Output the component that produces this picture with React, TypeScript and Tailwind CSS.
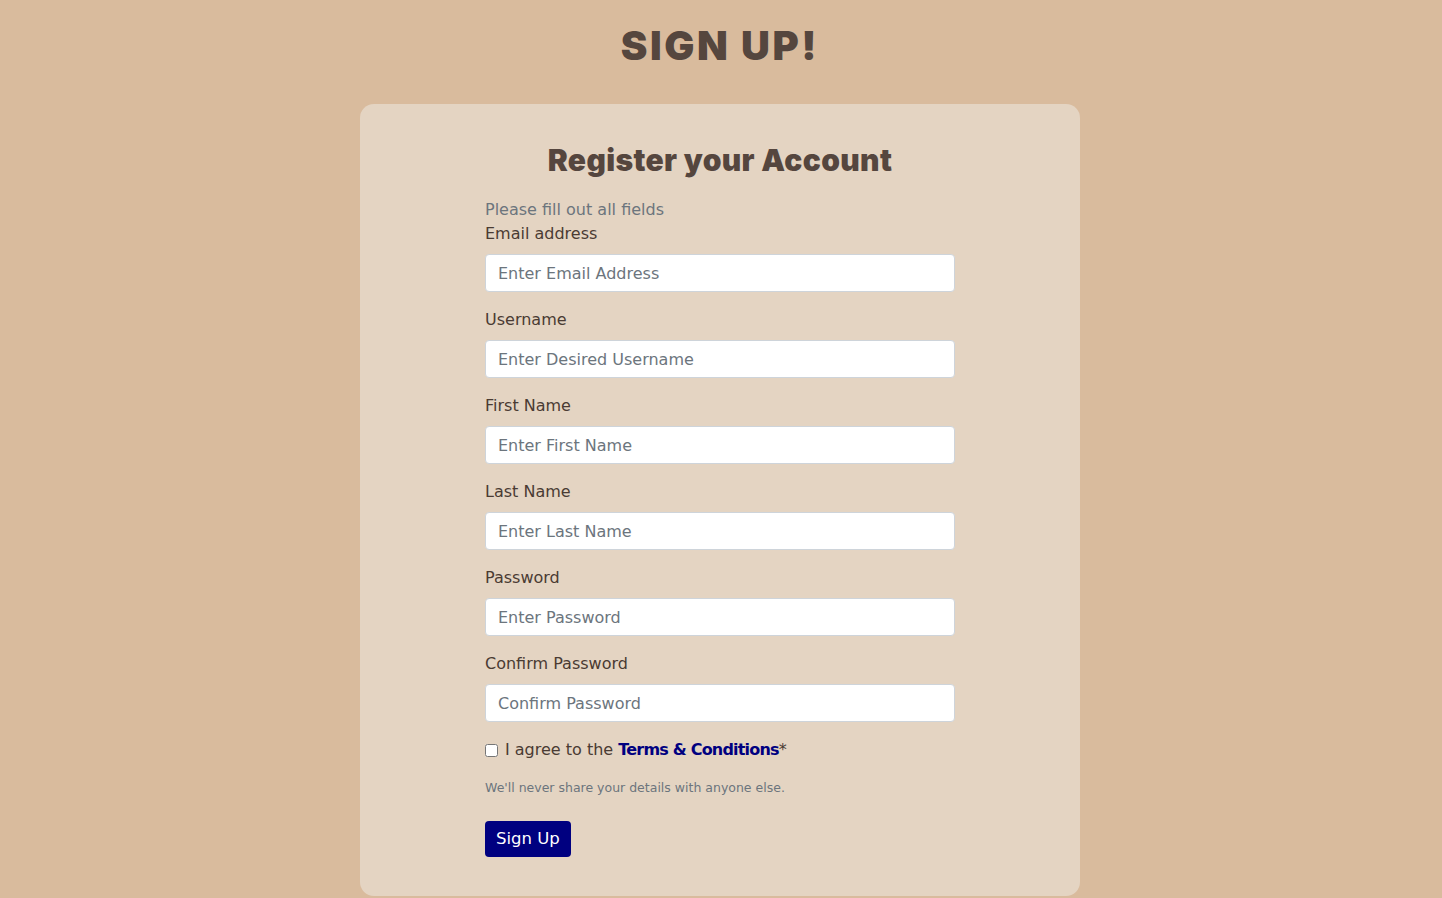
import React from 'react';

const fields = [
  { label: 'Email address', placeholder: 'Enter Email Address', type: 'email' },
  { label: 'Username', placeholder: 'Enter Desired Username', type: 'text' },
  { label: 'First Name', placeholder: 'Enter First Name', type: 'text' },
  { label: 'Last Name', placeholder: 'Enter Last Name', type: 'text' },
  { label: 'Password', placeholder: 'Enter Password', type: 'password' },
  { label: 'Confirm Password', placeholder: 'Confirm Password', type: 'password' },
];

export default function App() {
  return (
    <div className="min-h-screen bg-[#d9bb9d] font-['DejaVu_Sans',sans-serif] text-[#4a3b33]">
      <div className="w-[1440px]">
        <h1 className="pt-[22px] text-center font-['Inter',sans-serif] text-[40px] font-black leading-[48px] tracking-[0.065em] text-[#55463e]">
          SIGN UP!
        </h1>

        <div className="mx-auto mt-[34px] w-[720px] rounded-[14px] bg-[#e4d4c2] pt-[38px] pb-[39px]">
          <h2 className="text-center font-['Inter',sans-serif] text-[30px] font-black leading-[36px] tracking-[0.012em] text-[#55463e]">
            Register your Account
          </h2>

          <form className="mx-auto mt-[20px] w-[470px]" onSubmit={(e) => e.preventDefault()}>
            <p className="text-[16px] leading-6 text-[#6c757d]">Please fill out all fields</p>

            {fields.map((f) => (
              <div key={f.label} className="mb-4">
                <label className="mb-2 block text-[16px] leading-6">{f.label}</label>
                <input
                  type={f.type}
                  placeholder={f.placeholder}
                  className="block h-[38px] w-full rounded-[4px] border border-[#ced4da] bg-white px-3 text-[16px] text-[#212529] outline-none placeholder:text-[#6c757d]"
                />
              </div>
            ))}

            <div className="flex items-center text-[16px] leading-6">
              <input type="checkbox" className="mr-[7px] h-[13px] w-[13px]" />
              <span>
                I agree to the{' '}
                <a href="#" className="font-bold tracking-[-0.05em] text-[#000080]">
                  Terms &amp; Conditions
                </a>
                *
              </span>
            </div>

            <p className="mt-[15px] text-[12.5px] leading-[21px] text-[#6c757d]">
              We'll never share your details with anyone else.
            </p>

            <button
              type="submit"
              className="mt-[23px] h-[36px] rounded-[4px] bg-[#000080] px-[11px] text-[16.5px] text-white"
            >
              Sign Up
            </button>
          </form>
        </div>
      </div>
    </div>
  );
}
